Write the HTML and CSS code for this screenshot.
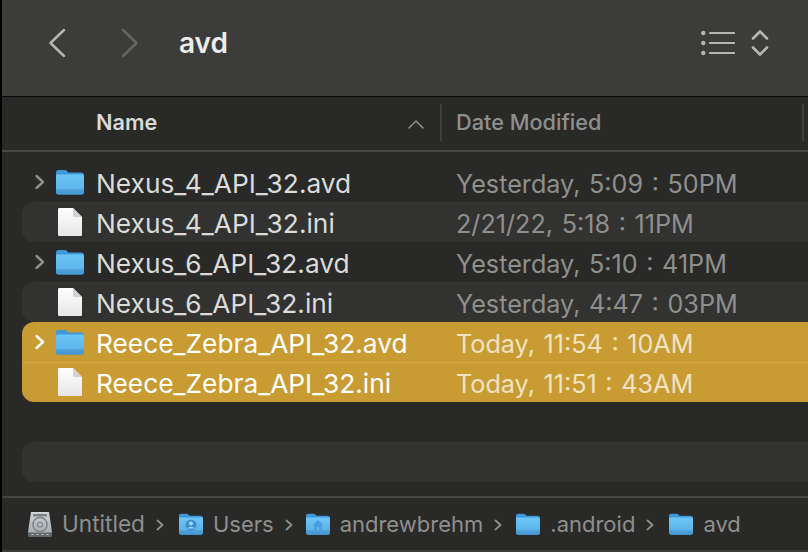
FILE: index.html
```html
<!DOCTYPE html>
<html lang="en">
<head>
<meta charset="utf-8">
<title>avd</title>
<link rel="stylesheet" href="styles.css">
</head>
<body>
<svg class="defs" width="0" height="0" aria-hidden="true">
  <defs>
    <linearGradient id="fg" x1="0" y1="0" x2="0" y2="1">
      <stop offset="0" stop-color="#6ec6f8"/>
      <stop offset="0.70" stop-color="#5cb5ea"/>
      <stop offset="0.71" stop-color="#6bbdec"/>
      <stop offset="0.76" stop-color="#4f9fd8"/>
      <stop offset="1" stop-color="#4596d3"/>
    </linearGradient>
    <linearGradient id="pg" x1="0" y1="0" x2="0" y2="1">
      <stop offset="0" stop-color="#ffffff"/>
      <stop offset="1" stop-color="#e6e6e6"/>
    </linearGradient>
    <linearGradient id="dg" x1="0" y1="0" x2="0" y2="1">
      <stop offset="0" stop-color="#d0d6d8"/>
      <stop offset="1" stop-color="#a0a7aa"/>
    </linearGradient>
    <symbol id="folder" viewBox="0 0 28 26">
      <path d="M0 3.500C0 1.800 1 1 2.500 1h6.200c1 0 1.600.3 2.200 1l1.400 1.400H25c2 0 3 1 3 3V23c0 1.700-1 2.500-2.500 2.500h-23C1 25.500 0 24.700 0 23z" fill="#3f97da"/>
      <path d="M0 7c0-1 .7-1.600 1.700-1.600h24.600c1 0 1.700.6 1.700 1.600v16c0 1.700-1 2.500-2.500 2.500h-23C1 25.500 0 24.700 0 23z" fill="url(#fg)"/>
    </symbol>
    <symbol id="page" viewBox="0 0 24 28">
      <path d="M1.500 0H15l9 9v17.500c0 1-.5 1.500-1.500 1.500h-21C.5 28 0 27.500 0 26.500v-25C0 .5.5 0 1.500 0z" fill="url(#pg)"/>
      <path d="M15 0l9 9h-7.500c-1 0-1.500-.5-1.500-1.500z" fill="#d2d2d2"/>
    </symbol>
    <symbol id="expand" viewBox="0 0 12 16">
      <path d="M2.500 2L9 8l-6.500 6" fill="none" stroke="currentColor" stroke-width="2.400" stroke-linecap="round" stroke-linejoin="round"/>
    </symbol>
    <symbol id="crumb" viewBox="0 0 8 12">
      <path d="M1.500 1.500L6.500 6l-5 4.500" fill="none" stroke="currentColor" stroke-width="1.800" stroke-linecap="round" stroke-linejoin="round"/>
    </symbol>
  </defs>
</svg>

<div class="window">
  <header class="toolbar">
    <svg class="nav" viewBox="0 0 18 30"><path d="M16 2L2.500 15 16 28" fill="none" stroke="#b4b4b3" stroke-width="2.500" stroke-linecap="round" stroke-linejoin="round"/></svg>
    <svg class="nav nav-next" viewBox="0 0 18 30"><path d="M2 2l13.500 13L2 28" fill="none" stroke="#646463" stroke-width="2.500" stroke-linecap="round" stroke-linejoin="round"/></svg>
    <h1 class="title">avd</h1>
    <svg class="viewlist" viewBox="0 0 34 26">
      <g fill="#b6b6b5"><circle cx="2.300" cy="3" r="2.200"/><circle cx="2.300" cy="13" r="2.200"/><circle cx="2.300" cy="23" r="2.200"/></g>
      <g stroke="#b6b6b5" stroke-width="2.200" stroke-linecap="round"><path d="M9 3h24"/><path d="M9 13h24"/><path d="M9 23h24"/></g>
    </svg>
    <svg class="stepper" viewBox="0 0 18 28">
      <path d="M2 9.500L9 2.500l7 7M2 18.500l7 7 7-7" fill="none" stroke="#b6b6b5" stroke-width="2.600" stroke-linecap="round" stroke-linejoin="round"/>
    </svg>
  </header>

  <div class="columns">
    <div class="col col-name">
      <span>Name</span>
      <svg class="sort" viewBox="0 0 16 9"><path d="M1 8l7-7 7 7" fill="none" stroke="#8e8e8d" stroke-width="1.500" stroke-linecap="round" stroke-linejoin="round"/></svg>
    </div>
    <div class="col col-date">Date Modified</div>
  </div>

  <main class="list">
    <div class="row">
      <svg class="arrow"><use href="#expand"/></svg>
      <svg class="icon-folder"><use href="#folder"/></svg>
      <span class="name">Nexus_4_API_32.avd</span>
      <span class="date">Yesterday, 5:09 : 50PM</span>
    </div>
    <div class="row alt">
      <span class="arrow"></span>
      <svg class="icon-page"><use href="#page"/></svg>
      <span class="name">Nexus_4_API_32.ini</span>
      <span class="date">2/21/22, 5:18 : 11PM</span>
    </div>
    <div class="row">
      <svg class="arrow"><use href="#expand"/></svg>
      <svg class="icon-folder"><use href="#folder"/></svg>
      <span class="name">Nexus_6_API_32.avd</span>
      <span class="date">Yesterday, 5:10 : 41PM</span>
    </div>
    <div class="row alt">
      <span class="arrow"></span>
      <svg class="icon-page"><use href="#page"/></svg>
      <span class="name">Nexus_6_API_32.ini</span>
      <span class="date">Yesterday, 4:47 : 03PM</span>
    </div>
    <div class="row sel sel-first">
      <svg class="arrow"><use href="#expand"/></svg>
      <svg class="icon-folder"><use href="#folder"/></svg>
      <span class="name">Reece_Zebra_API_32.avd</span>
      <span class="date">Today, 11:54 : 10AM</span>
    </div>
    <div class="row sel sel-last">
      <span class="arrow"></span>
      <svg class="icon-page"><use href="#page"/></svg>
      <span class="name">Reece_Zebra_API_32.ini</span>
      <span class="date">Today, 11:51 : 43AM</span>
    </div>
    <div class="row"></div>
    <div class="row alt"></div>
  </main>

  <footer class="pathbar">
    <svg class="crumb-icon disk" viewBox="0 0 24 26">
      <path d="M3 1h18l3 20v3c0 1-.5 1.500-1.500 1.500h-21C.5 25.500 0 25 0 24v-3z" fill="url(#dg)"/>
      <path d="M5 3h14v2.500H5z" fill="#7c8285"/>
      <circle cx="12" cy="13.500" r="7" fill="none" stroke="#7d8487" stroke-width="1.500"/>
      <circle cx="12" cy="13.500" r="2.500" fill="none" stroke="#7d8487" stroke-width="1.200"/>
      <path d="M0 21.500h24v3.500H0z" fill="#62676a"/>
      <path d="M3 23h3v1H3zM8 23h3v1H8zM13 23h3v1h-3zM18 23h3v1h-3z" fill="#a9afb2"/>
    </svg>
    <span class="crumb crumb-wide">Untitled</span>
    <svg class="sep"><use href="#crumb"/></svg>
    <span class="folder-wrap">
      <svg class="crumb-icon"><use href="#folder"/></svg>
      <svg class="badge" viewBox="0 0 12 12"><circle cx="6" cy="6" r="5.500" fill="#3f8fd0"/><circle cx="6" cy="4.500" r="2" fill="#a6d8f8"/><path d="M2.500 9.500c.5-2 6.500-2 7 0z" fill="#a6d8f8"/></svg>
    </span>
    <span class="crumb crumb-users">Users</span>
    <svg class="sep"><use href="#crumb"/></svg>
    <span class="folder-wrap">
      <svg class="crumb-icon"><use href="#folder"/></svg>
      <svg class="badge" viewBox="0 0 12 12"><path d="M6 1L.5 6.200h1.800V11h2.600V8h2.200v3h2.600V6.200h1.800z" fill="#4a9ddc"/></svg>
    </span>
    <span class="crumb crumb-home">andrewbrehm</span>
    <svg class="sep"><use href="#crumb"/></svg>
    <svg class="crumb-icon"><use href="#folder"/></svg>
    <span class="crumb">.android</span>
    <svg class="sep"><use href="#crumb"/></svg>
    <svg class="crumb-icon"><use href="#folder"/></svg>
    <span class="crumb">avd</span>
  </footer>
</div>
</body>
</html>
```

FILE: styles.css
```css
* { box-sizing: border-box; }

html, body {
  margin: 0;
  height: 100%;
  overflow: hidden;
  background: #000;
}

.defs { display: block; height: 0; }

.window {
  display: flex;
  flex-direction: column;
  height: 552px;
  margin-left: 2px;
  background: #292928;
  font-family: Inter, "Liberation Sans", sans-serif;
  overflow: hidden;
}

/* toolbar */
.toolbar {
  flex: none;
  display: flex;
  align-items: center;
  height: 97px;
  padding: 0 0 11px 46px;
  background: #3c3c3b;
  border-bottom: 1px solid #050505;
}

.nav { width: 18px; height: 30px; flex: none; }
.nav-next { margin-left: 55px; }

.title {
  margin: 0 0 0 40px;
  font-size: 28px;
  font-weight: 600;
  color: #ededec;
  line-height: 32px;
}

.viewlist { width: 34px; height: 26px; margin-left: auto; flex: none; }
.stepper { width: 18px; height: 28px; margin: 0 39px 0 16px; flex: none; }

/* column header */
.columns {
  flex: none;
  display: flex;
  align-items: stretch;
  height: 55px;
  padding: 7px 0 9px;
  border-bottom: 2px solid #464644;
}

.col { display: flex; align-items: center; font-size: 21.700px; line-height: 24px; }
.col > span, .col-date { padding-bottom: 2px; }

.col-name {
  width: 440px;
  padding-left: 94px;
  padding-right: 16px;
  font-weight: 600;
  color: #d9d9d8;
  justify-content: space-between;
  border-right: 2px solid #3f3f3d;
}

.col-date {
  width: 362px;
  padding-left: 14px;
  color: #8f8f8d;
  font-weight: 500;
  border-right: 2px solid #3f3f3d;
}

.sort { width: 16px; height: 9px; flex: none; margin-top: 4px; }

/* list */
.list {
  flex: 1;
  padding-top: 10px;
}

.row {
  display: flex;
  align-items: center;
  height: 40px;
  margin-left: 20px;
}

.alt { background: #323231; border-radius: 12px 0 0 12px; }

.arrow { width: 12px; height: 16px; flex: none; margin-left: 12px; color: #8f8f8d; }

.icon-folder { width: 28px; height: 26px; flex: none; margin: 0 12px 0 10px; }
.icon-page { width: 24px; height: 28px; flex: none; margin: 0 14px 0 12px; }

.name {
  width: 360px;
  flex: none;
  padding-top: 2px;
  font-size: 26.300px;
  color: #dbdbda;
  white-space: nowrap;
}

.date {
  padding-top: 4px;
  font-size: 25.200px;
  word-spacing: 1.500px;
  color: #8f8f8d;
  white-space: nowrap;
}

.sel { background: #c89c33; }
.sel .name { color: #fff; }
.sel .date { color: #f0e2c2; }
.sel .arrow { color: #fff; }
.sel-first { border-radius: 12px 0 0 0; }
.sel-last { border-radius: 0 0 0 12px; box-shadow: inset 0 1px 0 #d0a74a; }

/* path bar */
.pathbar {
  flex: none;
  display: flex;
  align-items: center;
  height: 56px;
  padding: 0 0 0 26px;
  border-top: 2px solid #444442;
  border-bottom: 2px solid #3c3c3b;
  font-size: 22px;
  color: #8f8f8d;
}

.crumb { line-height: 24px; white-space: nowrap; }
.crumb-wide { font-size: 22.600px; }
.crumb-icon { width: 24px; height: 24px; flex: none; margin-right: 10px; display: block; }
.disk { height: 26px; }
.sep { width: 8px; height: 12px; flex: none; margin: 2px 15px 0 11px; color: #8f8f8d; }
.crumb-users + .sep { margin-right: 13px; }
.crumb-home + .sep { margin-right: 14px; }
.folder-wrap { position: relative; flex: none; }
.badge { position: absolute; left: 6px; top: 7px; width: 12px; height: 12px; }
```
